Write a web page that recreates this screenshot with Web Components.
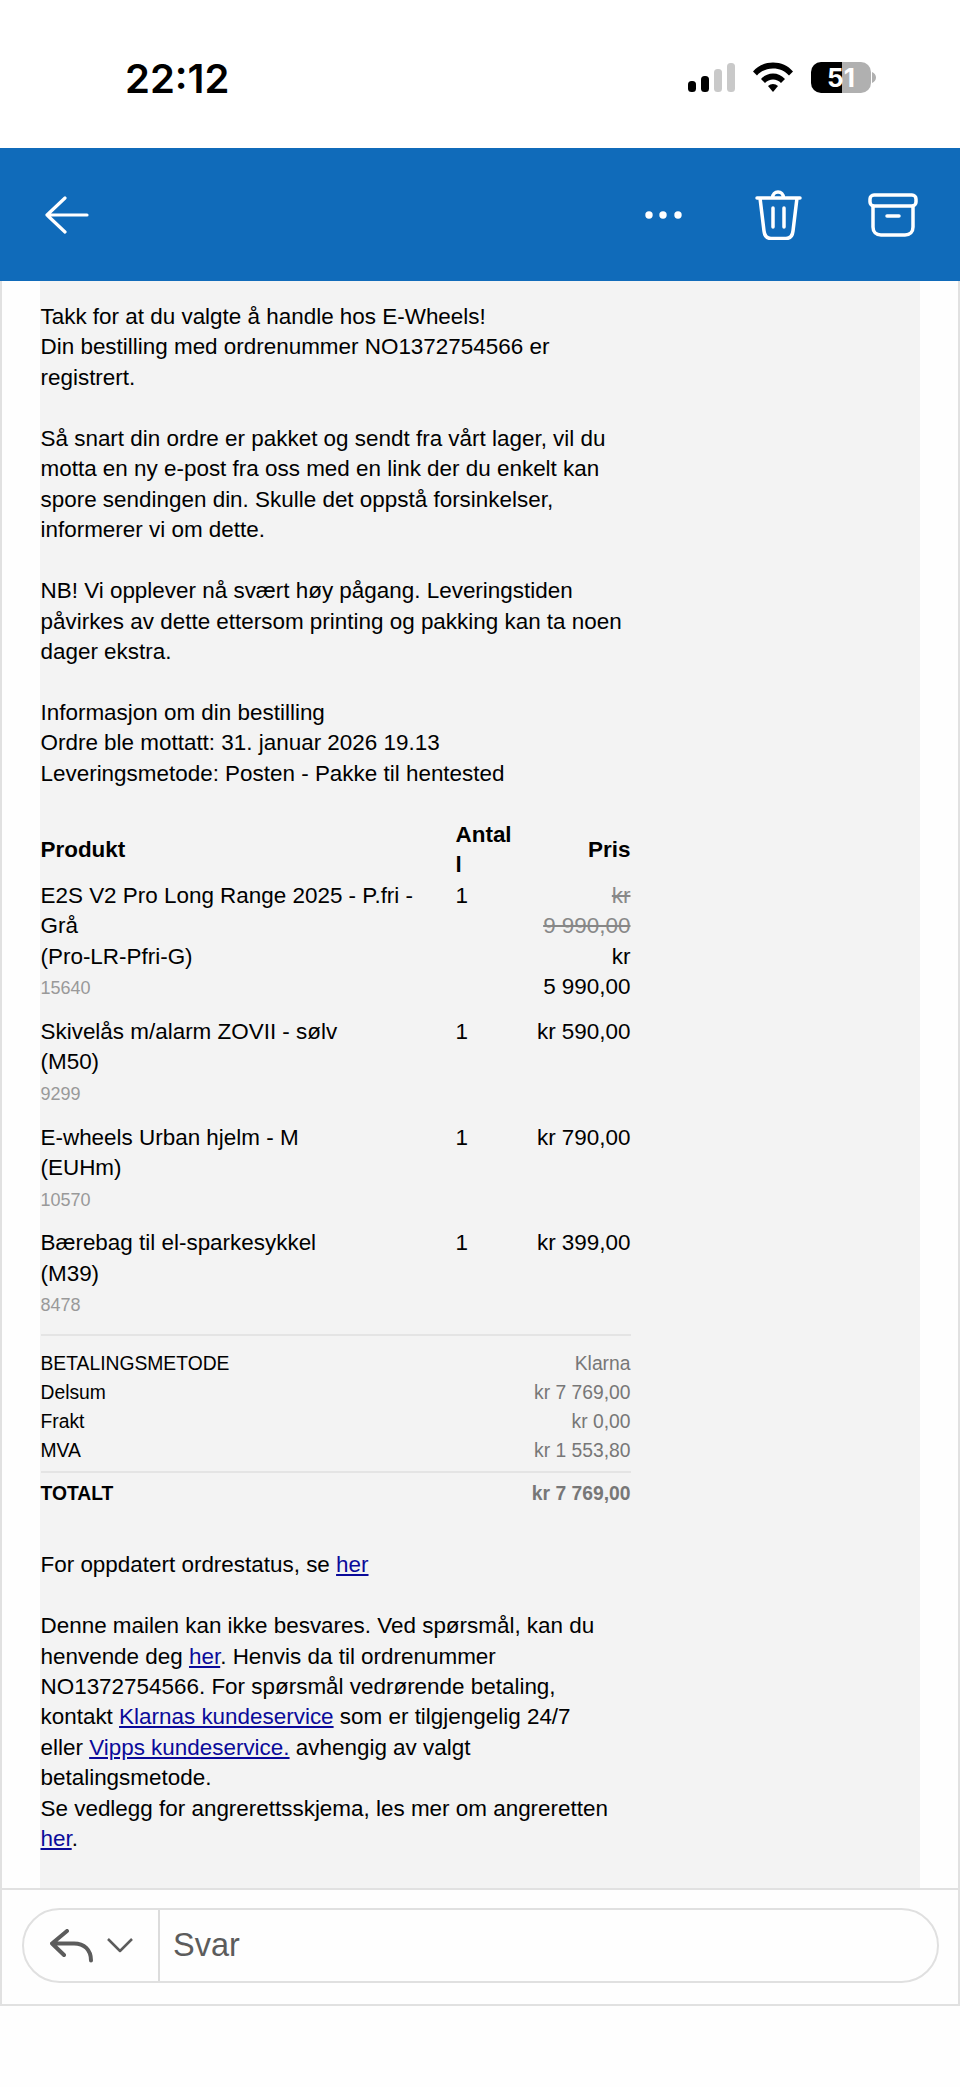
<!DOCTYPE html>
<html lang="no"><head><meta charset="utf-8"><title>Ordrebekreftelse</title>
<style>
html,body{margin:0;padding:0;background:#fefefe}
body{font-family:"Liberation Sans",Arial,sans-serif;width:960px}
</style></head>
<body>
<mail-app>
<status-bar slot="status" time="22:12" battery="51"></status-bar>
<mail-toolbar slot="toolbar"></mail-toolbar>
<mail-body slot="body">
<mail-para>Takk for at du valgte å handle hos E-Wheels!<br>Din bestilling med ordrenummer NO1372754566 er<br>registrert.</mail-para>
<mail-para>Så snart din ordre er pakket og sendt fra vårt lager, vil du<br>motta en ny e-post fra oss med en link der du enkelt kan<br>spore sendingen din. Skulle det oppstå forsinkelser,<br>informerer vi om dette.</mail-para>
<mail-para>NB! Vi opplever nå svært høy pågang. Leveringstiden<br>påvirkes av dette ettersom printing og pakking kan ta noen<br>dager ekstra.</mail-para>
<mail-para>Informasjon om din bestilling<br>Ordre ble mottatt: 31. januar 2026 19.13<br>Leveringsmetode: Posten - Pakke til hentested</mail-para>
<order-table>
<order-row name="E2S V2 Pro Long Range 2025 - P.fri - Grå" code="(Pro-LR-Pfri-G)" sku="15640" qty="1" old="kr 9&#160;990,00" price="kr 5&#160;990,00"></order-row>
<order-row name="Skivelås m/alarm ZOVII - sølv" code="(M50)" sku="9299" qty="1" price="kr 590,00"></order-row>
<order-row name="E-wheels Urban hjelm - M" code="(EUHm)" sku="10570" qty="1" price="kr 790,00"></order-row>
<order-row name="Bærebag til el-sparkesykkel" code="(M39)" sku="8478" qty="1" price="kr 399,00"></order-row>
</order-table>
<order-totals>
<total-line label="BETALINGSMETODE" value="Klarna"></total-line>
<total-line label="Delsum" value="kr 7&#160;769,00"></total-line>
<total-line label="Frakt" value="kr 0,00"></total-line>
<total-line label="MVA" value="kr 1&#160;553,80"></total-line>
<total-line grand label="TOTALT" value="kr 7&#160;769,00"></total-line>
</order-totals>
<mail-para>For oppdatert ordrestatus, se <mail-link>her</mail-link></mail-para>
<mail-para>Denne mailen kan ikke besvares. Ved spørsmål, kan du<br>henvende deg <mail-link>her</mail-link>. Henvis da til ordrenummer<br>NO1372754566. For spørsmål vedrørende betaling,<br>kontakt <mail-link>Klarnas kundeservice</mail-link> som er tilgjengelig 24/7<br>eller <mail-link>Vipps kundeservice.</mail-link> avhengig av valgt<br>betalingsmetode.<br>Se vedlegg for angrerettsskjema, les mer om angreretten<br><mail-link>her</mail-link>.</mail-para>
</mail-body>
<reply-bar slot="reply"></reply-bar>
</mail-app>
<script>
function def(name, html){
  customElements.define(name, class extends HTMLElement{
    constructor(){super();this.attachShadow({mode:'open'});}
    connectedCallback(){
      const a=n=>this.getAttribute(n)||'';
      this.shadowRoot.innerHTML=typeof html==='function'?html(a,this):html;
    }
  });
}
def('mail-app',`<style>:host{display:flex;flex-direction:column;width:960px;height:2087px;overflow:hidden;background:#fefefe}
.main{box-sizing:border-box;border:solid #e1e1e1;border-width:0 2px 2px;display:flex;flex-direction:column}</style>
<slot name="status"></slot><slot name="toolbar"></slot>
<div class="main"><slot name="body"></slot><slot name="reply"></slot></div>`);

def('status-bar',(a)=>`<style>:host{display:flex;height:148px;box-sizing:border-box;padding:0 84px 0 125px;align-items:flex-start;justify-content:space-between;background:#fff}
.time{margin-top:54px;font:600 40px/50px Inter,"Liberation Sans",sans-serif;color:#000}
.right{display:flex;align-items:flex-start;margin-top:61px}
.batt{position:relative;width:60px;height:31px;margin-top:1px;border-radius:10px;overflow:hidden;background:linear-gradient(90deg,#000 0 31px,#b0b0b0 31px);color:#fff;font:700 26px/31px Inter,"Liberation Sans",sans-serif;text-align:center}
.wrap{display:flex;align-items:center;gap:1px;margin-left:18px}
.wifi{margin-left:17px}
svg{display:block}</style>
<div class="time">${a('time')}</div>
<div class="right">
<svg width="48" height="31" viewBox="0 0 48 31"><rect x="0" y="20" width="8" height="11" rx="3.500"/><rect x="13" y="15" width="8" height="16" rx="3.500"/><rect x="26" y="8" width="8" height="23" rx="3.500" fill="#c9c9c9"/><rect x="39" y="2" width="8" height="29" rx="3.500" fill="#c9c9c9"/></svg>
<svg class="wifi" width="40" height="31" viewBox="0 0 40 31"><path d="M0 10.500C5 4.500 12 1.500 20 1.500s15 3 20 9l-4 4C32 10 26.500 7.500 20 7.500S8 10 4 14.500z"/><path d="M8 18C11 14.500 15.500 12.500 20 12.500s9 2 12 5.500l-4 4C26 20 23 18.500 20 18.500S14 20 12 22z"/><path d="M15 25c1.500-1.300 3.200-2 5-2s3.500.7 5 2l-5 6z"/></svg>
<div class="wrap"><div class="batt">${a('battery')}</div><svg width="4" height="11" viewBox="0 0 4 11"><path d="M0 0c2.500 1 4 3 4 5.500S2.500 10 0 11z" fill="#b0b0b0"/></svg></div>
</div>`);

def('mail-toolbar',`<style>:host{display:flex;height:133px;background:#106bba;align-items:center;box-sizing:border-box;padding:0 42px 0 45px;justify-content:space-between}
.r{display:flex;align-items:center}
svg{display:block;fill:none;stroke:#fff;stroke-linecap:round;stroke-linejoin:round}</style>
<svg width="44" height="38" viewBox="0 0 44 38" stroke-width="3.200"><path d="M20 2 2 19l18 17M2 19h40"/></svg>
<div class="r">
<svg width="37" height="10" viewBox="0 0 37 10" style="stroke:none;fill:#fff;margin-right:73px"><circle cx="4" cy="5" r="3.700"/><circle cx="18" cy="5" r="3.700"/><circle cx="33" cy="5" r="3.700"/></svg>
<svg width="47" height="50" viewBox="0 0 47 50" stroke-width="3.500" style="margin-right:66px"><path d="M2 8h43M17.500 8c0-8 11-8 11 0M5 8l4 33c.5 4.500 3 7.500 7 7.500h15c4 0 6.500-3 7-7.500l4-33M18 18v19M29 18v19"/></svg>
<svg width="50" height="44" viewBox="0 0 50 44" stroke-width="3.500"><rect x="2" y="2" width="46" height="11" rx="4"/><path d="M5 13v21c0 5 3 8 8 8h24c5 0 8-3 8-8V13M19 23h12"/></svg>
</div>`);

def('mail-body',`<style>:host{display:block;box-sizing:border-box;height:1607px;margin:0 0 0 38px;width:880px;background:#f3f3f3;padding:21px 0 0 .5px;color:#000;font-size:22.440px;line-height:30.450px;overflow:hidden}</style><slot></slot>`);

def('mail-para',`<style>:host{display:block;margin-bottom:30.450px}</style><slot></slot>`);
def('mail-link',`<style>:host{display:inline;color:#0a0a9a;text-decoration:underline}</style><slot></slot>`);

def('order-table',`<style>:host{display:block;width:590px;margin-bottom:-.5px}
.h{display:grid;grid-template-columns:415px 68px 1fr;font-weight:700;align-items:center}
.q{word-break:break-all;width:60px}
.p{text-align:right}</style>
<div class="h"><div>Produkt</div><div class="q">Antall</div><div class="p">Pris</div></div><slot></slot>`);

def('order-row',(a)=>`<style>:host{display:grid;grid-template-columns:415px 68px 1fr;padding-bottom:12.800px;line-height:30.500px}
.n{padding-right:10px}.s{font-size:18px;color:#999;line-height:32px}
.p{text-align:right}
s{display:block;color:#888}</style>
<div class="n">${a('name')}<br>${a('code')}<div class="s">${a('sku')}</div></div>
<div>${a('qty')}</div>
<div class="p">${a('old')?`<s>${a('old')}</s>`:''}${a('price')}</div>`);

def('order-totals',`<style>:host{display:block;width:590px;border-top:2px solid #e4e4e4;margin:0 0 42.500px;padding-top:13px;box-sizing:border-box}</style><slot></slot>`);
def('total-line',(a)=>`<style>:host{display:flex;justify-content:space-between;font-size:19.300px;line-height:29px}
:host([grand]){font-weight:700;border-top:2px solid #e4e4e4;margin-top:6px;padding-top:6px}
.v{color:#777}</style><span>${a('label')}</span><span class="v">${a('value')}</span>`);

def('reply-bar',`<style>:host{display:block;box-sizing:border-box;height:116px;border-top:2px solid #e1e1e1;padding:18px 19px 0 20px;background:#fefefe}
.pill{display:flex;height:75px;box-sizing:border-box;border:2px solid #e0e0e0;border-radius:38px;align-items:center}
.l{width:136px;height:100%;box-sizing:border-box;border-right:2px solid #dcdcdc;display:flex;align-items:center;padding-left:26px;flex:none}
.t{margin-left:13px;font-size:32.500px;color:#5c5c5c}
svg{display:block;fill:none;stroke:#5c5c5c;stroke-linecap:round;stroke-linejoin:round}</style>
<div class="pill"><div class="l">
<svg width="44" height="34" viewBox="0 0 44 34" stroke-width="4"><path d="M17 2 2 14.500 14 26M2 14.500h22c10 0 17 6 17 17"/></svg>
<svg width="26" height="15" viewBox="0 0 26 15" stroke-width="2.500" style="margin-left:13px;stroke-linecap:butt"><path d="M1 1l12 12L25 1"/></svg>
</div><div class="t">Svar</div></div>`);
</script>
</body></html>
